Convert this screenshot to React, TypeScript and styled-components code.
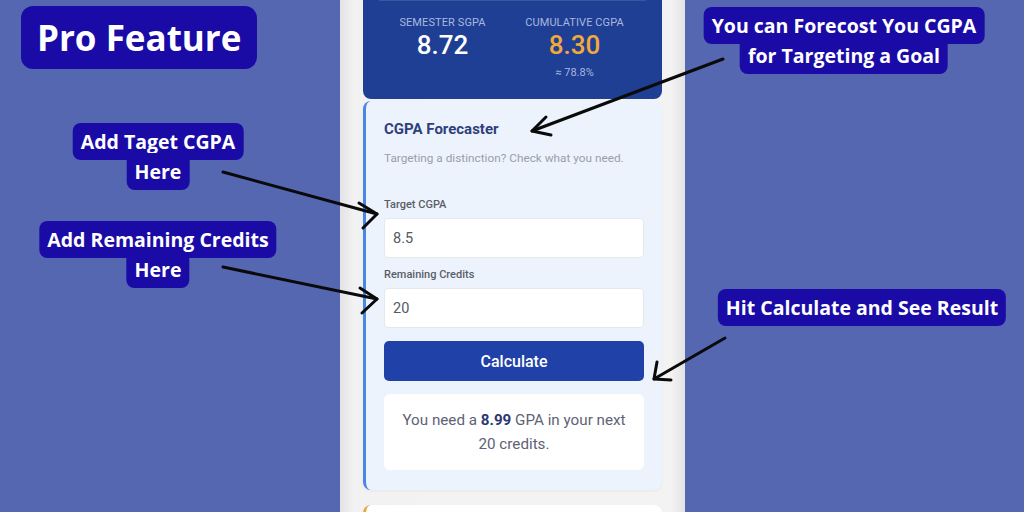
import React from "react";
import styled, { createGlobalStyle } from "styled-components";

const GlobalStyle = createGlobalStyle`
  html, body {
    margin: 0;
    padding: 0;
    background: #5567b1;
  }
  * {
    box-sizing: border-box;
  }
`;

function App() {
  return (
    <React.Fragment>
      <GlobalStyle />
      <Page>
        <Phone>
          <Screen>
            <StatsCard>
              <TopRule />
              <StatsRow>
                <Stat>
                  <StatLabel>SEMESTER SGPA</StatLabel>
                  <StatValue>8.72</StatValue>
                </Stat>
                <Stat>
                  <StatLabel>CUMULATIVE CGPA</StatLabel>
                  <StatValue $accent>8.30</StatValue>
                  <StatNote>≈ 78.8%</StatNote>
                </Stat>
              </StatsRow>
            </StatsCard>

            <ForecastCard>
              <Title>CGPA Forecaster</Title>
              <Subtitle>Targeting a distinction? Check what you need.</Subtitle>

              <FieldLabel>Target CGPA</FieldLabel>
              <Input defaultValue="8.5" />

              <FieldLabel $gap={10}>Remaining Credits</FieldLabel>
              <Input defaultValue="20" />

              <Button>Calculate</Button>

              <Result>
                You need a <strong>8.99</strong> GPA in your next
                <br />
                20 credits.
              </Result>
            </ForecastCard>

            <NextCard />
          </Screen>
        </Phone>

        <Callout $left={21} $top={6}>
          <Line $big>Pro Feature</Line>
        </Callout>

        <Callout $left={844} $top={11} $center>
          <Line>You can Forecost You CGPA </Line>
          <br />
          <Line>for Targeting a Goal</Line>
        </Callout>

        <Callout $left={158} $top={127} $center>
          <Line>Add Taget CGPA </Line>
          <br />
          <Line>Here</Line>
        </Callout>

        <Callout $left={158} $top={225} $center>
          <Line>Add Remaining Credits </Line>
          <br />
          <Line>Here</Line>
        </Callout>

        <Callout $left={862} $top={293} $center>
          <Line>Hit Calculate and See Result</Line>
        </Callout>

        <Arrows viewBox="0 0 1024 512">
          <g stroke="#0a0a0a" strokeWidth="3" fill="none" strokeLinecap="round" strokeLinejoin="round">
            <line x1="723" y1="59" x2="532" y2="131" />
            <polyline points="546,117 532,131 551,135" />
            <line x1="223" y1="172" x2="377" y2="214" />
            <polyline points="359,203 377,214 363,228" />
            <line x1="223" y1="267" x2="377" y2="299" />
            <polyline points="360,288 377,299 362,313" />
            <line x1="725" y1="338" x2="654" y2="379" />
            <polyline points="657,362 654,379 671,380" />
          </g>
        </Arrows>
      </Page>
    </React.Fragment>
  );
}

const Page = styled.div`
  position: relative;
  width: 1024px;
  height: 512px;
  overflow: hidden;
  display: flex;
  justify-content: center;
  background: #5567b1;
  font-family: Roboto, "Liberation Sans", sans-serif;
`;

const Phone = styled.div`
  width: 345px;
  height: 512px;
  margin-left: 1px;
  padding: 0 6px;
  background: linear-gradient(90deg, #e3e3e5 0%, #f2f2f3 4%, #f3f3f4 96%, #e2e2e4 100%);
`;

const Screen = styled.div`
  height: 100%;
  padding: 0 17px;
  display: flex;
  flex-direction: column;
  gap: 2px;
`;

const StatsCard = styled.div`
  height: 99px;
  flex-shrink: 0;
  background: #1f3f95;
  border-radius: 0 0 8px 8px;
  padding: 0 16px;
  display: flex;
  flex-direction: column;
`;

const TopRule = styled.div`
  height: 1px;
  background: rgba(255, 255, 255, 0.12);
`;

const StatsRow = styled.div`
  display: grid;
  grid-template-columns: 118px 118px;
  column-gap: 14px;
  justify-content: center;
  margin-left: -8px;
  padding-top: 15px;
`;

const Stat = styled.div`
  display: flex;
  flex-direction: column;
  align-items: center;
`;

const StatLabel = styled.div`
  font-size: 11px;
  line-height: 14px;
  color: #a9b7de;
  letter-spacing: 0.1px;
`;

const StatValue = styled.div<{ $accent?: boolean }>`
  font-size: 26px;
  line-height: 30px;
  margin-top: 0;
  font-weight: 500;
  color: ${(p) => (p.$accent ? "#f2a93b" : "#ffffff")};
`;

const StatNote = styled.div`
  font-size: 11px;
  line-height: 14px;
  margin-top: 6px;
  color: #a9b7de;
`;

const ForecastCard = styled.div`
  height: 389px;
  flex-shrink: 0;
  background: #edf3fc;
  border-left: 3px solid #4a86e6;
  border-radius: 8px;
  padding: 18px 18px 20px 18px;
  display: flex;
  flex-direction: column;
  box-shadow: 0 1px 3px rgba(0, 0, 0, 0.05);
`;

const Title = styled.div`
  font-size: 15px;
  line-height: 20px;
  font-weight: 700;
  color: #2d3f7c;
`;

const Subtitle = styled.div`
  margin-top: 11px;
  font-size: 11.8px;
  line-height: 16px;
  color: #9a9ea8;
`;

const FieldLabel = styled.div<{ $gap?: number }>`
  margin-top: ${(p) => p.$gap ?? 32}px;
  font-size: 11px;
  line-height: 14px;
  font-weight: 500;
  color: #5a5e68;
`;

const Input = styled.input`
  margin-top: 6px;
  height: 40px;
  width: 100%;
  flex-shrink: 0;
  border: 1px solid #e4e8ef;
  border-radius: 4px;
  background: #ffffff;
  padding: 0 8px;
  font-family: Roboto, "Liberation Sans", sans-serif;
  font-size: 14.5px;
  color: #555a62;
  outline: none;
`;

const Button = styled.button`
  margin-top: 13px;
  height: 40px;
  width: 100%;
  flex-shrink: 0;
  border: none;
  border-radius: 5px;
  background: #1f41a8;
  color: #ffffff;
  font-family: Roboto, "Liberation Sans", sans-serif;
  font-size: 16px;
  font-weight: 500;
`;

const Result = styled.div`
  margin-top: 13px;
  height: 76px;
  flex-shrink: 0;
  background: #ffffff;
  border-radius: 6px;
  padding: 14px 4px;
  text-align: center;
  font-size: 15.2px;
  line-height: 24px;
  color: #5e6274;

  strong {
    font-weight: 700;
    color: #2d3770;
  }
`;

const NextCard = styled.div`
  margin-top: 13px;
  height: 30px;
  flex-shrink: 0;
  background: #ffffff;
  border-left: 3px solid #f0a33a;
  border-radius: 8px;
`;

const Callout = styled.div<{ $left: number; $top: number; $center?: boolean }>`
  position: absolute;
  left: ${(p) => p.$left}px;
  top: ${(p) => p.$top}px;
  transform: ${(p) => (p.$center ? "translateX(-50%)" : "none")};
  white-space: nowrap;
  text-align: center;
  font-family: "Open Sans", "DejaVu Sans", sans-serif;
  font-weight: 700;
  font-size: 19.5px;
  line-height: 30px;
  color: #ffffff;
`;

const Line = styled.span<{ $big?: boolean }>`
  background: #1b0ba6;
  padding: ${(p) => (p.$big ? "0 16px" : "5px 8px")};
  border-radius: ${(p) => (p.$big ? "12px" : "8px")};
  font-size: ${(p) => (p.$big ? "35px" : "19.5px")};
  line-height: ${(p) => (p.$big ? "63px" : "30px")};
  height: ${(p) => (p.$big ? "63px" : "auto")};
  -webkit-box-decoration-break: clone;
  box-decoration-break: clone;
  display: ${(p) => (p.$big ? "inline-block" : "inline")};
  vertical-align: top;
`;

const Arrows = styled.svg`
  position: absolute;
  inset: 0;
  width: 1024px;
  height: 512px;
  pointer-events: none;
`;

export default App;
